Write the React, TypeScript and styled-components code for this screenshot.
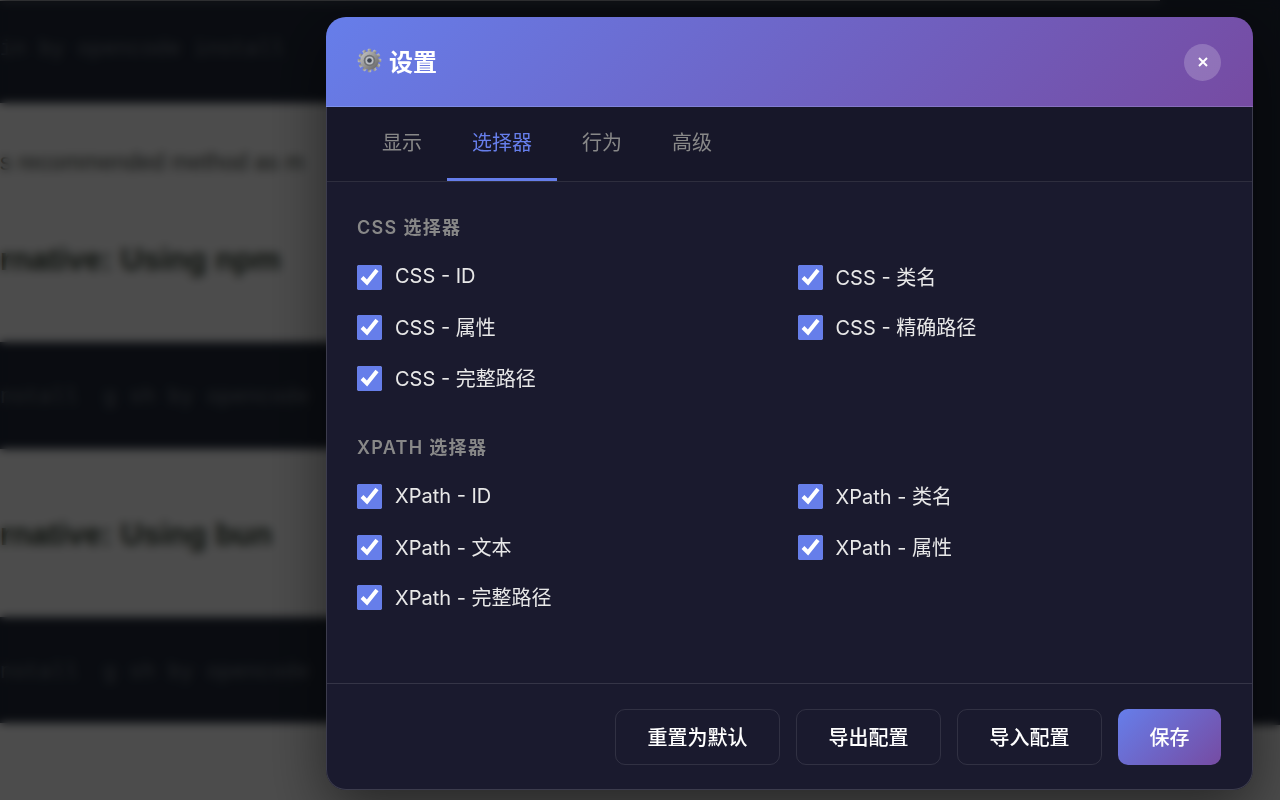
import React from "react";
import styled, { createGlobalStyle } from "styled-components";

const Global = createGlobalStyle`
  html, body { margin: 0; padding: 0; height: 100%; overflow: hidden; background: #fff; }
  * { box-sizing: border-box; }
`;
const FONT = `Inter, "Noto Sans CJK SC", "Noto Sans", sans-serif`;

const Page = styled.div`
  display: grid;
  grid-template-columns: 1fr 120px;
  height: 800px;
  overflow: hidden;
  background: #fff;
  font-family: "Liberation Sans", sans-serif;
`;
const Article = styled.main`
  display: flex;
  flex-direction: column;
  min-width: 0;
  padding-top: 1px;
`;
const Aside = styled.aside`
  height: 725px;
  background: #222a3a;
`;
const CodeBlock = styled.pre<{ $h: number; $top: number; $shift: number }>`
  margin: ${(p) => p.$top}px 0 0;
  height: ${(p) => p.$h}px;
  padding: ${(p) => Math.max(p.$shift, 0)}px 0 ${(p) => Math.max(-p.$shift, 0)}px;
  flex: none;
  display: flex;
  align-items: center;
  background: #222a3a;
  color: #6f7680;
  font: 21.5px/1 "Liberation Mono", monospace;
  white-space: pre;
  overflow: hidden;
`;
const Para = styled.p`
  margin: 43px 0 0;
  height: 32px;
  flex: none;
  font-size: 23px;
  line-height: 32px;
  color: #454b45;
  white-space: pre;
`;
const Heading = styled.h2<{ $top: number }>`
  margin: ${(p) => p.$top}px 0 0;
  height: 40px;
  flex: none;
  font-size: 31px;
  line-height: 40px;
  font-weight: 700;
  color: #2f3d2f;
  white-space: nowrap;
  overflow: hidden;
`;

const Overlay = styled.div`
  position: fixed;
  inset: 0;
  display: flex;
  justify-content: flex-end;
  padding: 17px 27px 10px 0;
  background: rgba(0, 0, 0, 0.7);
  backdrop-filter: blur(5px);
`;
const Modal = styled.div`
  width: 927px;
  height: 773px;
  display: flex;
  flex-direction: column;
  background: #1a1a2e;
  border-radius: 20px;
  box-shadow: 0 20px 60px rgba(0, 0, 0, 0.5);
  overflow: hidden;
  font-family: ${FONT};
  color: #fff;
`;
const Header = styled.header`
  flex: none;
  height: 90px;
  display: flex;
  align-items: center;
  justify-content: space-between;
  padding: 0 32px 0 31px;
  background: linear-gradient(135deg, #667eea 0%, #764ba2 100%);
  border-bottom: 1px solid rgba(255, 255, 255, 0.15);
`;
const Title = styled.h2`
  margin: 0 0 2px;
  display: flex;
  align-items: center;
  gap: 7px;
  font-size: 24px;
  font-weight: 600;
  color: #fff;
`;
const CloseButton = styled.button`
  width: 37px;
  height: 37px;
  margin-top: 1px;
  padding: 0;
  border: none;
  border-radius: 50%;
  display: flex;
  align-items: center;
  justify-content: center;
  background: rgba(255, 255, 255, 0.2);
  color: #fff;
`;
const Panel = styled.div`
  flex: 1;
  min-height: 0;
  display: flex;
  flex-direction: column;
  border: solid rgba(255, 255, 255, 0.15);
  border-width: 0 1px 1px;
  border-radius: 0 0 20px 20px;
`;
const Tabs = styled.nav`
  flex: none;
  height: 75px;
  display: flex;
  padding: 0 30px;
  background: rgba(0, 0, 0, 0.1);
  border-bottom: 1px solid rgba(255, 255, 255, 0.1);
`;
const Tab = styled.button<{ $active?: boolean }>`
  height: 74px;
  padding: 0 25px 2px;
  border: none;
  border-bottom: 3px solid ${(p) => (p.$active ? "#667eea" : "transparent")};
  background: none;
  font-family: inherit;
  font-size: 20px;
  color: ${(p) => (p.$active ? "#667eea" : "#888")};
`;
const Body = styled.div`
  flex: 1;
  min-height: 0;
  padding: 31px 30px 0;
  display: flex;
  flex-direction: column;
  gap: 39px;
`;
const Section = styled.section`
  display: flex;
  flex-direction: column;
  gap: 19px;
`;
const SectionTitle = styled.h3`
  margin: 0;
  font-size: 18px;
  line-height: 30px;
  height: 30px;
  font-weight: 600;
  letter-spacing: 1.3px;
  text-transform: uppercase;
  color: #888;
`;
const Grid = styled.div`
  display: grid;
  grid-template-columns: 1fr 1fr;
  column-gap: 16px;
  row-gap: 20px;
`;
const Option = styled.label`
  display: flex;
  align-items: center;
  gap: 13px;
  height: 30.5px;
  font-size: 20px;
  color: #e8e8e8;
`;
const OptionText = styled.span`
  padding-bottom: 2px;
`;
const Check = styled.input`
  width: 25px;
  height: 25px;
  margin: 0;
  accent-color: #667eea;
`;
const Footer = styled.footer`
  flex: none;
  height: 106px;
  display: flex;
  justify-content: flex-end;
  align-items: flex-start;
  gap: 16px;
  padding: 25px 31px 25px 30px;
  border-top: 1px solid rgba(255, 255, 255, 0.12);
`;
const Button = styled.button<{ $primary?: boolean }>`
  height: 56px;
  padding: 0 31.5px 2px;
  border-radius: 10px;
  border: ${(p) => (p.$primary ? "none" : "1px solid rgba(255,255,255,0.1)")};
  background: ${(p) => (p.$primary ? "linear-gradient(135deg, #667eea 0%, #764ba2 100%)" : "transparent")};
  font-family: inherit;
  font-size: 20px;
  font-weight: 500;
  color: #fff;
`;

const GearIcon = () => (
  <svg width="25" height="25" viewBox="0 0 26 26" aria-hidden="true">
    <defs>
      <linearGradient id="gearFill" x1="0" y1="0" x2="1" y2="1">
        <stop offset="0" stopColor="#c9c9c9" />
        <stop offset="1" stopColor="#5f5f5f" />
      </linearGradient>
    </defs>
    <g fill="url(#gearFill)">
      {Array.from({ length: 12 }).map((_, i) => (
        <rect key={i} x="11.2" y="0.8" width="3.6" height="5" rx="0.8" transform={`rotate(${i * 30} 13 13)`} />
      ))}
      <circle cx="13" cy="13" r="9.6" />
    </g>
    <circle cx="13" cy="13" r="6" fill="#6f7174" />
    <circle cx="13" cy="13" r="4.2" fill="#b9bcc2" />
    <circle cx="13" cy="13" r="2.4" fill="#3c4350" />
  </svg>
);

const XIcon = () => (
  <svg width="10" height="10" viewBox="0 0 10 10" aria-hidden="true">
    <path d="M1 1 L9 9 M9 1 L1 9" stroke="#fff" strokeWidth="2" fill="none" />
  </svg>
);

const css = ["CSS - ID", "CSS - 类名", "CSS - 属性", "CSS - 精确路径", "CSS - 完整路径"];
const xpath = ["XPath - ID", "XPath - 类名", "XPath - 文本", "XPath - 属性", "XPath - 完整路径"];

const Group = ({ title, items }: { title: string; items: string[] }) => (
  <Section>
    <SectionTitle>{title}</SectionTitle>
    <Grid>
      {items.map((t) => (
        <Option key={t}>
          <Check type="checkbox" defaultChecked />
          <OptionText>{t}</OptionText>
        </Option>
      ))}
    </Grid>
  </Section>
);

export default function App() {
  return (
    <>
      <Global />
      <Page>
        <Article>
          <CodeBlock $h={102} $top={0} $shift={-5}>{"in by opencode install"}</CodeBlock>
          <Para>{"s recommended method as m"}</Para>
          <Heading $top={62}>rnative: Using npm</Heading>
          <CodeBlock $h={107} $top={62} $shift={5}>{"nstall  g sh by opencode"}</CodeBlock>
          <Heading $top={66}>rnative: Using bun</Heading>
          <CodeBlock $h={106} $top={62} $shift={5}>{"nstall  g sh by opencode"}</CodeBlock>
        </Article>
        <Aside />
      </Page>
      <Overlay>
        <Modal>
          <Header>
            <Title>
              <GearIcon />
              设置
            </Title>
            <CloseButton aria-label="关闭">
              <XIcon />
            </CloseButton>
          </Header>
          <Panel>
            <Tabs>
              <Tab>显示</Tab>
              <Tab $active>选择器</Tab>
              <Tab>行为</Tab>
              <Tab>高级</Tab>
            </Tabs>
            <Body>
              <Group title="CSS 选择器" items={css} />
              <Group title="XPath 选择器" items={xpath} />
            </Body>
            <Footer>
              <Button>重置为默认</Button>
              <Button>导出配置</Button>
              <Button>导入配置</Button>
              <Button $primary>保存</Button>
            </Footer>
          </Panel>
        </Modal>
      </Overlay>
    </>
  );
}
